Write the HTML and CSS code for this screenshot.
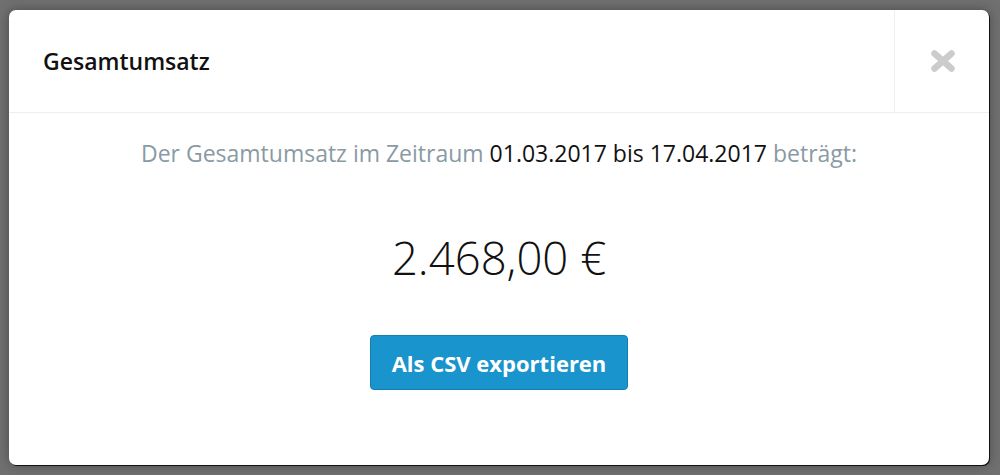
FILE: index.html
```html
<!DOCTYPE html>
<html lang="de">
<head>
    <meta charset="UTF-8">
    <title>Gesamtumsatz</title>
    <link rel="stylesheet" href="styles.css">
</head>
<body>
    <div class="backdrop">
        <div class="modal">
            <div class="modal-header">
                <h2 class="modal-title">Gesamtumsatz</h2>
                <button class="modal-close" type="button" aria-label="Schließen">
                    <svg width="24" height="22" viewBox="0 0 24 22">
                        <path d="M3.5 3.5 L20.5 18.5 M20.5 3.5 L3.5 18.5" stroke="#cccccc" stroke-width="6.5" stroke-linecap="round"/>
                    </svg>
                </button>
            </div>
            <div class="modal-body">
                <p class="summary">Der Gesamtumsatz im Zeitraum <span class="date">01.03.2017 bis 17.04.2017</span> beträgt:</p>
                <div class="amount">2.468,00 €</div>
                <button class="btn-export" type="button">Als CSV exportieren</button>
            </div>
        </div>
    </div>
</body>
</html>
```

FILE: styles.css
```css
body {
    margin: 0;
    background-color: #6f706f;
    font-family: 'Open Sans', 'Noto Sans', sans-serif;
}
.backdrop {
    height: 475px;
    padding: 10px 11px 10px 9px;
    box-sizing: border-box;
}
.modal {
    height: 100%;
    background-color: #fff;
    border-radius: 7px;
    box-shadow: 1px 1px 0 #111, 0 0 12px rgba(0, 0, 0, 0.35);
    display: flex;
    flex-direction: column;
}
.modal-header {
    display: flex;
    height: 102px;
    border-bottom: 1px solid #e9eff3;
}
.modal-title {
    flex: 1;
    margin: 0;
    padding-left: 34px;
    display: flex;
    align-items: center;
    font-size: 23px;
    font-weight: 600;
    color: #111;
}
.modal-close {
    width: 95px;
    border: none;
    border-left: 1px solid #e9eff3;
    background: none;
    display: flex;
    align-items: center;
    justify-content: center;
    padding: 0 0 0 2px;
    cursor: pointer;
}
.modal-body {
    display: flex;
    flex-direction: column;
    align-items: center;
    padding-top: 24px;
}
.summary {
    margin: 0;
    font-size: 23px;
    line-height: 32px;
    color: #8a9aa3;
}
.date {
    color: #111;
}
.amount {
    margin-top: 58px;
    font-size: 45.5px;
    font-weight: 300;
    line-height: 60px;
    color: #111;
}
.btn-export {
    margin-top: 48px;
    width: 258px;
    height: 55px;
    border: 1px solid #137eb0;
    border-radius: 4px;
    background-color: #1a94cd;
    color: #fff;
    font-family: inherit;
    font-size: 22px;
    font-weight: 700;
    cursor: pointer;
}
```
